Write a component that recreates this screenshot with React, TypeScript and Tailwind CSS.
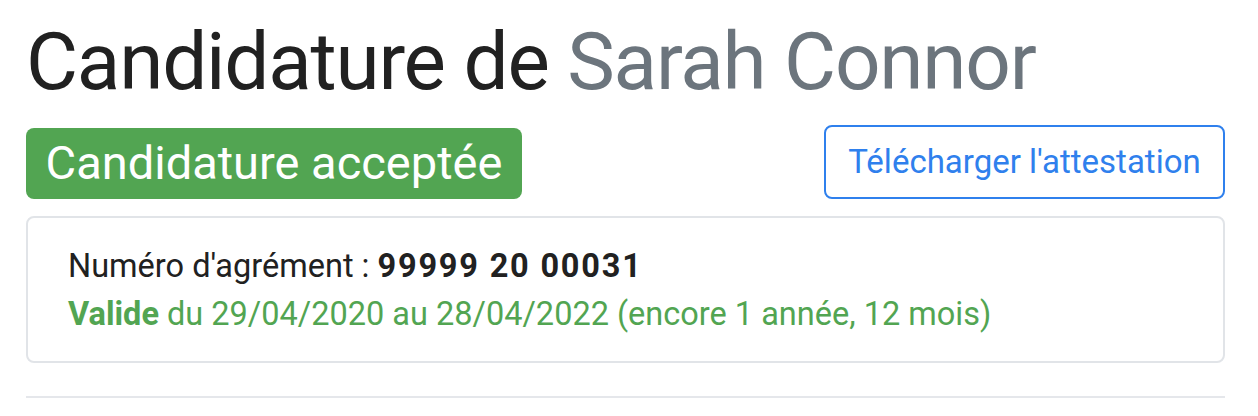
export default function App() {
  return (
    <div
      className="w-[1258px] h-[416px] bg-white text-[#212529] pl-[26px] pr-[33px]"
      style={{ fontFamily: "Roboto, 'Noto Sans', sans-serif" }}
    >
      <h1 className="pt-[14px] text-[80px] leading-[96px] font-normal tracking-[-1.2px] text-[#212121]">
        Candidature de <span className="text-[#6c757d]">Sarah Connor</span>
      </h1>

      <div className="mt-[15px] flex items-end justify-between">
        <span className="inline-flex h-[71px] w-[496px] items-center justify-center rounded-[8px] bg-[#52a552] text-[47px] text-white">
          Candidature acceptée
        </span>
        <button className="h-[74px] w-[401px] rounded-[8px] border-2 border-[#2f80ed] text-[33px] text-[#2f80ed]">
          Télécharger l'attestation
        </button>
      </div>

      <div className="mt-[17px] h-[147px] rounded-[8px] border-2 border-[#e1e4e8] pl-[40px] pt-[24px] text-[32.5px] leading-[48px] text-[#212121]">
        <p>
          Numéro d'agrément :{" "}
          <strong className="font-bold tracking-[1.8px]">99999 20 00031</strong>
        </p>
        <p className="text-[#52a552]">
          <strong className="font-bold">Valide</strong> du 29/04/2020 au 28/04/2022 (encore 1 année, 12 mois)
        </p>
      </div>

      <hr className="mt-[33px] border-t-2 border-[#e5e7eb]" />
    </div>
  );
}
